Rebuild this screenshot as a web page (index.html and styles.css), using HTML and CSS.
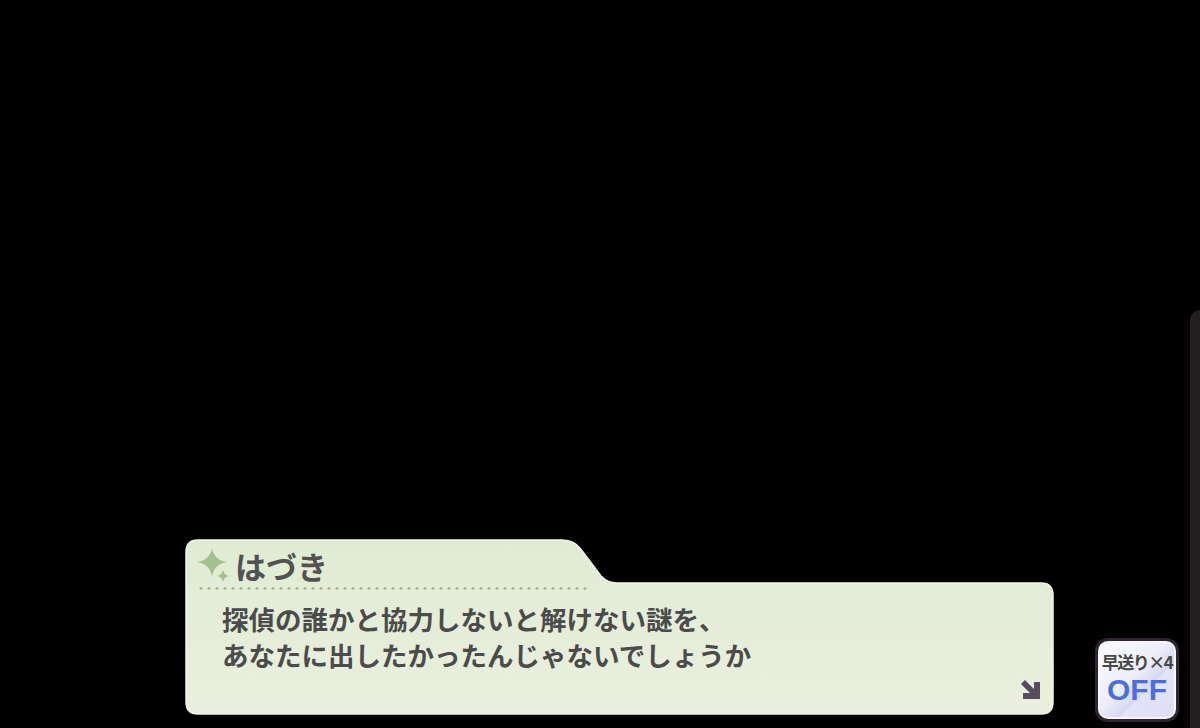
FILE: index.html
```html
<!DOCTYPE html>
<html lang="ja">
<head>
<meta charset="utf-8">
<link rel="stylesheet" href="styles.css">
</head>
<body>
<div class="page">
  <div class="stage">
    <div class="dialog">
      <svg class="dialog-bg" width="870" height="177" viewBox="0 0 870 177">
        <defs>
          <linearGradient id="fill" x1="0" y1="0" x2="0" y2="1">
            <stop offset="0" stop-color="#dfecd3"/>
            <stop offset="1" stop-color="#ebefdf"/>
          </linearGradient>
        </defs>
        <path d="M1,13 Q1,1 13,1 H376 C387,1 392,5 398,13 L416,37 C421,42 425,44 436,44 H856 Q868,44 868,56 V163 Q868,175 856,175 H13 Q1,175 1,163 Z" fill="url(#fill)" stroke="#f1f4ea" stroke-width="1.5"/>
      </svg>
      <div class="name-row">
        <svg class="sparkle" width="34" height="38" viewBox="0 0 34 38">
          <path d="M15,2 Q17,14 30,16 Q17,18 15,31 Q13,18 0,16 Q13,14 15,2 Z" fill="#a5c08f"/>
          <path d="M26,24 Q27,29 32,30 Q27,31 26,36 Q25,31 20,30 Q25,29 26,24 Z" fill="#a5c08f"/>
        </svg>
        <span class="name">はづき</span>
      </div>
      <div class="dots"></div>
      <p class="lines">探偵の誰かと協力しないと解けない謎を、<br>あなたに出したかったんじゃないでしょうか</p>
      <svg class="next" width="22" height="21" viewBox="0 0 22 21">
        <path d="M1,5 L5,1 L14,10 L14,3 L20,3 L20,20 L3,20 L3,14 L10,14 Z" fill="#594b5f"/>
      </svg>
    </div>
    <div class="ff-button">
      <span class="ff-label">早送り×4</span>
      <span class="ff-state">OFF</span>
    </div>
  </div>
  <div class="side"></div>
</div>
</body>
</html>
```

FILE: styles.css
```css
* { box-sizing: border-box; }
html, body { margin: 0; padding: 0; background: #000; }
.page {
  width: 1200px;
  height: 728px;
  display: flex;
  overflow: hidden;
  background: #000;
}
.stage {
  flex: 1;
  display: flex;
  align-items: flex-end;
  padding: 0 11px 6px 185px;
}
.dialog {
  position: relative;
  width: 870px;
  height: 177px;
  margin-bottom: 6px;
  display: flex;
  flex-direction: column;
  font-family: "Noto Sans CJK JP", "Noto Sans", sans-serif;
  font-weight: 700;
}
.dialog-bg {
  position: absolute;
  left: 0;
  top: 0;
  z-index: 0;
}
.name-row {
  position: relative;
  display: flex;
  align-items: center;
  height: 38px;
  margin-top: 7px;
  padding-left: 12px;
  gap: 4px;
}
.sparkle { display: block; }
.name {
  font-size: 31px;
  line-height: 1;
  color: #525252;
}
.dots {
  position: relative;
  margin: 3px 0 0 12px;
  width: 394px;
  height: 3px;
  background-image: radial-gradient(circle, #abc592 1.5px, transparent 1.7px);
  background-size: 8px 3px;
  background-position: 0 0;
}
.lines {
  position: relative;
  margin: 11px 0 0 37px;
  font-size: 26.5px;
  line-height: 36px;
  color: #4b4b4b;
}
.next {
  position: absolute;
  right: 13px;
  bottom: 16px;
}
.ff-button {
  width: 84px;
  height: 84px;
  margin-left: 40px;
  border-radius: 13px;
  border: 3px solid #2e2530;
  box-shadow: inset 0 0 0 2px #f6f6fc;
  background: linear-gradient(135deg, #fbfbff 0%, #eeeefa 45%, #d6d6f2 62%, #e4e4f8 63%, #dcdcf4 100%);
  display: flex;
  flex-direction: column;
  align-items: center;
  padding-top: 11px;
}
.ff-label {
  font-family: "Noto Sans CJK JP", sans-serif;
  font-weight: 700;
  font-size: 17px;
  line-height: 20px;
  color: #474747;
  letter-spacing: -1.5px;
}
.ff-state {
  font-family: "Liberation Sans", Arial, sans-serif;
  font-weight: 700;
  font-size: 30px;
  line-height: 30px;
  margin-top: 3px;
  color: #4a6ee2;
}
.side {
  width: 12px;
  height: 418px;
  align-self: flex-end;
  background: #221e22;
  border-top-left-radius: 14px;
}
```
